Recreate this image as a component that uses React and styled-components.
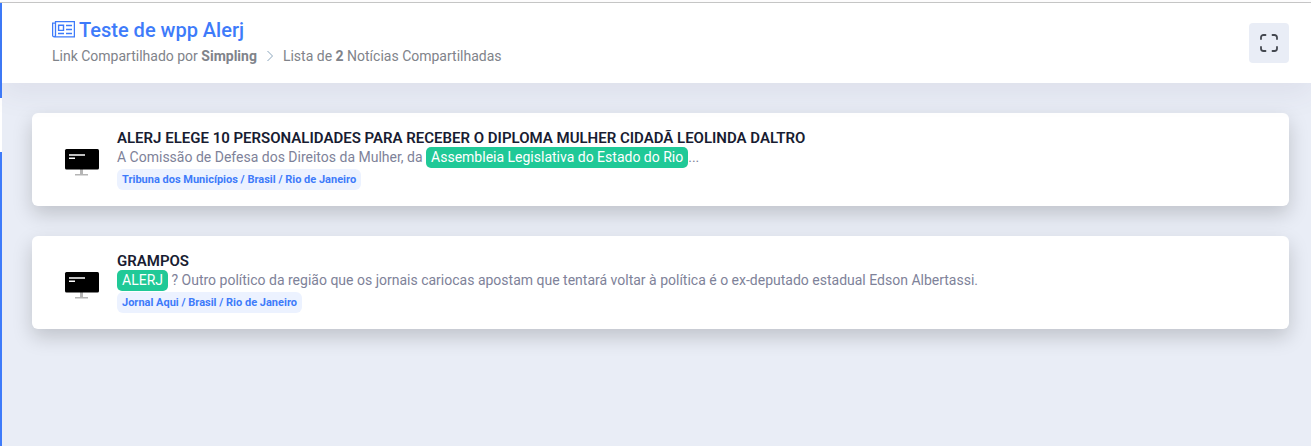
import React from "react";
import styled, { createGlobalStyle } from "styled-components";

const GlobalStyle = createGlobalStyle`
  * {
    box-sizing: border-box;
  }

  body {
    margin: 0;
    background: #e9edf6;
    color: #181c32;
    font-family: Roboto, "Liberation Sans", sans-serif;
    font-size: 14px;
  }

  h1, h2, p {
    margin: 0;
  }
`;

const Page = styled.div`
  display: flex;
  min-height: 100vh;
  padding-top: 2px;
  background: #fff;
`;

const Rail = styled.aside`
  display: flex;
  flex-direction: column;
  width: 2px;
  border-top: 1px solid #c8c8c8;
`;

const RailPart = styled.span`
  height: ${({ $height }) => $height || "auto"};
  flex: ${({ $height }) => ($height ? "none" : "1")};
  background: ${({ $active }) => ($active ? "#fff" : "#3e7bfa")};
`;

const Content = styled.div`
  display: flex;
  flex: 1;
  flex-direction: column;
  min-width: 0;
  border-top: 1px solid #c8c8c8;
`;

const Header = styled.header`
  display: flex;
  align-items: center;
  justify-content: space-between;
  height: 80px;
  padding: 0 22px 0 50px;
  background: #fff;
  box-shadow: 0 10px 30px rgba(82, 63, 105, 0.08);
  z-index: 1;
`;

const Heading = styled.div`
  padding-bottom: 2px;
`;

const Title = styled.h1`
  display: flex;
  align-items: center;
  gap: 4px;
  color: #3e7bfa;
  font-size: 20px;
  font-weight: 500;
  line-height: 28px;
`;

const Breadcrumb = styled.nav`
  display: flex;
  align-items: center;
  gap: 9px;
  color: #80838a;
  line-height: 24px;

  svg {
    color: #8ba6bd;
  }
`;

const FullscreenButton = styled.button`
  display: flex;
  align-items: center;
  justify-content: center;
  width: 40px;
  height: 40px;
  padding: 0;
  border: 0;
  border-radius: 4px;
  background: #e9edf6;
  color: #43474f;
  cursor: pointer;
`;

const Main = styled.main`
  display: flex;
  flex: 1;
  flex-direction: column;
  gap: 30px;
  padding: 30px 22px 30px 30px;
  background: #e9edf6;
`;

const Card = styled.article`
  display: flex;
  align-items: center;
  gap: 18px;
  padding: 16px 32px;
  border-radius: 6px;
  background: #fff;
  box-shadow: 0 8px 20px rgba(0, 0, 0, 0.18);
`;

const CardTitle = styled.h2`
  font-size: 15px;
  font-weight: 600;
  line-height: 18px;
`;

const Excerpt = styled.p`
  color: #7e8299;
  line-height: 20px;
`;

const Mark = styled.mark`
  display: inline-block;
  padding: 0 5px;
  border-radius: 5px;
  background: #20c997;
  color: #fff;
  line-height: 21px;
`;

const Source = styled.span`
  display: block;
  width: fit-content;
  margin-top: 1px;
  padding: 0 5px;
  border-radius: 6px;
  background: #ecf2ff;
  color: #3e7bfa;
  font-size: 11px;
  font-weight: 700;
  line-height: 21px;
`;

function NewspaperIcon() {
  return (
    <svg width="23" height="18" viewBox="0 0 23 18" fill="none" stroke="currentColor" aria-hidden="true">
      <path d="M3.5 14V.7h18.9v15.1H2.2A1.7 1.7 0 0 1 .6 14.2V2.2h2.9M3.5 14a1.6 1.6 0 0 1-1.3 1.8" strokeWidth="1.3" />
      <path d="M6.6 4.2h4.9v5.2H6.6z" strokeWidth="1.4" />
      <path d="M14 4.5h6M14 8.5h6M6 12.5h6M14 12.5h6" strokeWidth="1.3" />
    </svg>
  );
}

function ChevronIcon() {
  return (
    <svg width="8" height="12" viewBox="0 0 8 12" fill="none" stroke="currentColor" aria-hidden="true">
      <path d="M1.5 1l5 5-5 5" />
    </svg>
  );
}

function FullscreenIcon() {
  return (
    <svg
      width="18"
      height="18"
      viewBox="0 0 18 18"
      fill="none"
      stroke="currentColor"
      strokeWidth="1.8"
      strokeLinecap="round"
      aria-hidden="true"
    >
      <path d="M1 5V3.5A2.5 2.5 0 0 1 3.5 1H5.5M12.5 1h2A2.5 2.5 0 0 1 17 3.5V5M17 13v1.5a2.5 2.5 0 0 1-2.5 2.5h-2M5.5 17h-2A2.5 2.5 0 0 1 1 14.5V13" />
    </svg>
  );
}

function MonitorIcon() {
  return (
    <svg width="35" height="32" viewBox="0 0 35 32" aria-hidden="true">
      <path d="M16 25h3v5h5v1.5H11V30h5z" fill="#b5b5b5" />
      <rect x="1" y="5" width="34" height="20.5" rx="1.5" fill="#000" />
      <path d="M5 11h16M5 14.2h6" stroke="#fff" strokeWidth="1.4" />
    </svg>
  );
}

const news = [
  {
    id: 1,
    title: "ALERJ ELEGE 10 PERSONALIDADES PARA RECEBER O DIPLOMA MULHER CIDADÃ LEOLINDA DALTRO",
    before: "A Comissão de Defesa dos Direitos da Mulher, da ",
    term: "Assembleia Legislativa do Estado do Rio",
    after: "...",
    source: "Tribuna dos Municípios / Brasil / Rio de Janeiro",
  },
  {
    id: 2,
    title: "GRAMPOS",
    before: "",
    term: "ALERJ",
    after:
      " ? Outro político da região que os jornais cariocas apostam que tentará voltar à política é o ex-deputado estadual Edson Albertassi.",
    source: "Jornal Aqui / Brasil / Rio de Janeiro",
  },
];

export default function App() {
  return (
    <>
      <GlobalStyle />
      <Page>
        <Rail>
          <RailPart $height="95px" />
          <RailPart $height="54px" $active />
          <RailPart />
        </Rail>
        <Content>
          <Header>
            <Heading>
              <Title>
                <NewspaperIcon />
                Teste de wpp Alerj
              </Title>
              <Breadcrumb>
                <span>
                  Link Compartilhado por <strong>Simpling</strong>
                </span>
                <ChevronIcon />
                <span>
                  Lista de <strong>{news.length}</strong> Notícias Compartilhadas
                </span>
              </Breadcrumb>
            </Heading>
            <FullscreenButton type="button" aria-label="Tela cheia">
              <FullscreenIcon />
            </FullscreenButton>
          </Header>
          <Main>
            {news.map((item) => (
              <Card key={item.id}>
                <MonitorIcon />
                <div>
                  <CardTitle>{item.title}</CardTitle>
                  <Excerpt>
                    {item.before}
                    <Mark>{item.term}</Mark>
                    {item.after}
                  </Excerpt>
                  <Source>{item.source}</Source>
                </div>
              </Card>
            ))}
          </Main>
        </Content>
      </Page>
    </>
  );
}
